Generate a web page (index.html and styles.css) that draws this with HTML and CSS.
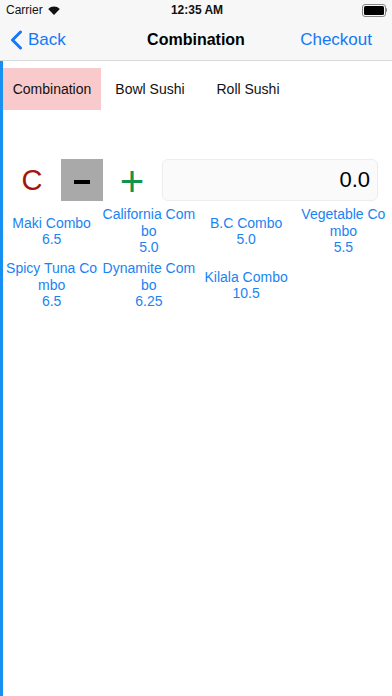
FILE: index.html
```html
<!DOCTYPE html>
<html>
<head>
<meta charset="utf-8">
<link rel="stylesheet" href="styles.css">
</head>
<body>
<div class="screen">
  <div class="status">
    <div class="status-left">
      <span class="carrier">Carrier</span>
      <svg class="wifi" width="12" height="9" viewBox="0 0 12 9">
        <path d="M6 9 L0.2 2.9 A8.5 8.5 0 0 1 11.8 2.9 Z" fill="#111"/>
      </svg>
    </div>
    <div class="time">12:35 AM</div>
    <div class="status-right">
      <div class="battery"><div class="battery-fill"></div></div>
      <div class="battery-nub"></div>
    </div>
  </div>
  <div class="nav">
    <div class="nav-left">
      <svg class="chev" width="13" height="20" viewBox="0 0 13 20">
        <path d="M10.5 2 L2.5 10 L10.5 18" fill="none" stroke="#1479f6" stroke-width="3" stroke-linecap="round" stroke-linejoin="round"/>
      </svg>
      <span class="nav-link">Back</span>
    </div>
    <div class="nav-title">Combination</div>
    <div class="nav-right"><span class="nav-link">Checkout</span></div>
  </div>
  <div class="main">
    <div class="tabs">
      <div class="tab active">Combination</div>
      <div class="tab">Bowl Sushi</div>
      <div class="tab">Roll Sushi</div>
    </div>
    <div class="calc">
      <div class="key key-c">C</div>
      <div class="key key-minus"><span class="minus-bar"></span></div>
      <div class="key key-plus">+</div>
      <div class="display">0.0</div>
    </div>
    <div class="grid">
      <div class="item"><span class="name">Maki Combo</span><span>6.5</span></div>
      <div class="item"><span class="name">California Combo</span><span>5.0</span></div>
      <div class="item"><span class="name">B.C Combo</span><span>5.0</span></div>
      <div class="item"><span class="name">Vegetable Combo</span><span>5.5</span></div>
      <div class="item"><span class="name">Spicy Tuna Combo</span><span>6.5</span></div>
      <div class="item"><span class="name">Dynamite Combo</span><span>6.25</span></div>
      <div class="item"><span class="name">Kilala Combo</span><span>10.5</span></div>
    </div>
  </div>
</div>
</body>
</html>
```

FILE: styles.css
```css
html, body {
  margin: 0;
  padding: 0;
  background: #fff;
  font-family: "Liberation Sans", Arial, sans-serif;
}
.screen {
  width: 392px;
  height: 696px;
  display: flex;
  flex-direction: column;
  overflow: hidden;
}
.status {
  height: 20px;
  background: #f7f7f7;
  display: grid;
  grid-template-columns: 1fr auto 1fr;
  align-items: center;
  font-size: 12px;
  color: #111;
}
.status-left {
  display: flex;
  align-items: center;
  padding-left: 6px;
  gap: 5px;
}
.time {
  font-weight: bold;
  padding-left: 2px;
}
.status-right {
  display: flex;
  align-items: center;
  justify-content: flex-end;
  padding-right: 5px;
}
.battery {
  width: 20px;
  height: 9px;
  border: 1px solid #888;
  border-radius: 3px;
  padding: 1px;
  box-sizing: content-box;
}
.battery-fill {
  width: 100%;
  height: 100%;
  background: #000;
  border-radius: 1.5px;
}
.battery-nub {
  width: 1.5px;
  height: 4px;
  background: #888;
  border-radius: 0 1px 1px 0;
}
.nav {
  height: 40px;
  background: #f7f7f7;
  border-bottom: 1px solid #d9d9d9;
  display: grid;
  grid-template-columns: 1fr auto 1fr;
  align-items: center;
  font-size: 17px;
}
.nav-left {
  display: flex;
  align-items: center;
  padding-left: 10px;
  gap: 5px;
}
.chev { display: block; }
.nav-link {
  color: #1479f6;
}
.nav-title {
  font-weight: bold;
  font-size: 16px;
  color: #000;
}
.nav-right {
  display: flex;
  justify-content: flex-end;
  padding-right: 20px;
}
.main {
  flex: 1;
  border-left: 3px solid #1890f2;
  display: flex;
  flex-direction: column;
}
.tabs {
  margin-top: 7px;
  display: flex;
  height: 42px;
}
.tab {
  width: 98px;
  display: flex;
  align-items: center;
  justify-content: center;
  font-size: 14px;
  color: #111;
}
.tab.active {
  background: #f9cacb;
}
.calc {
  margin-top: 49px;
  display: flex;
  align-items: center;
  padding-left: 8px;
  gap: 8px;
}
.key {
  width: 42px;
  height: 42px;
  display: flex;
  align-items: center;
  justify-content: center;
}
.key-c {
  font-size: 29px;
  color: #a3170d;
}
.key-minus {
  background: #a9a9a9;
}
.minus-bar {
  width: 16px;
  height: 4px;
  background: #000;
  margin-top: 3px;
}
.key-plus {
  font-size: 42px;
  color: #13934b;
  padding-top: 3px;
  box-sizing: border-box;
}
.display {
  margin-left: 1px;
  width: 216px;
  height: 42px;
  box-sizing: border-box;
  background: #fafafa;
  border: 1px solid #ededed;
  border-radius: 6px;
  display: flex;
  align-items: center;
  justify-content: flex-end;
  padding-right: 7px;
  font-size: 22px;
  color: #000;
}
.grid {
  margin-top: 3px;
  display: grid;
  grid-template-columns: repeat(4, 1fr);
  grid-auto-rows: 54px;
}
.item {
  display: flex;
  flex-direction: column;
  justify-content: center;
  align-items: center;
  text-align: center;
  padding: 0 2px;
  font-size: 14px;
  line-height: 16.5px;
  color: #1a83f3;
  word-break: break-all;
}
.name { display: block; }
```
